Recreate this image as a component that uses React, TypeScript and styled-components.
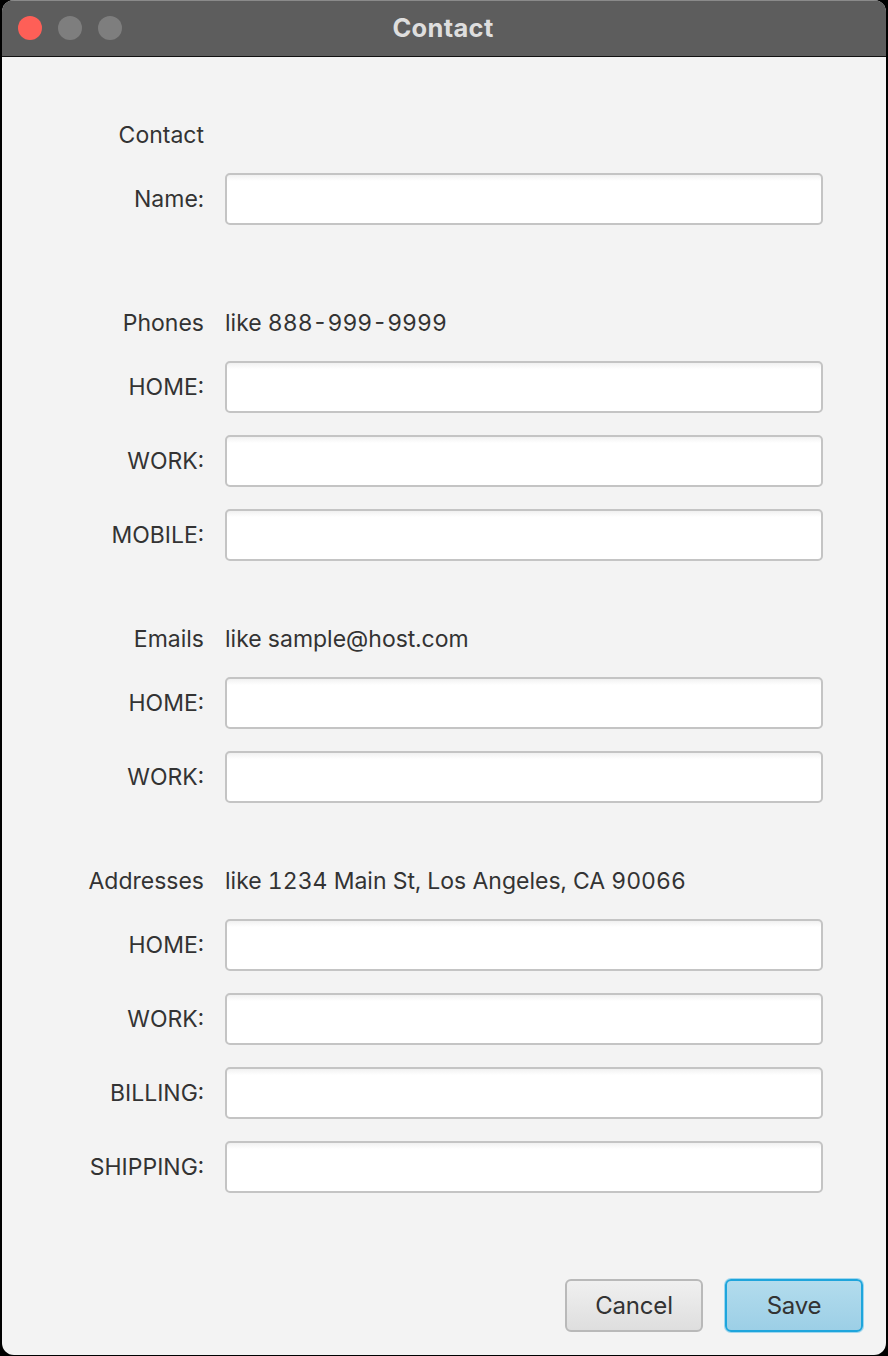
import React from "react";
import styled, { createGlobalStyle } from "styled-components";

const Global = createGlobalStyle`
  html, body { margin: 0; padding: 0; background: #000; }
  body { font-family: Inter, "Noto Sans", "Liberation Sans", sans-serif; }
  * { box-sizing: border-box; }
`;

const Window = styled.div`
  margin: 0 2px;
  width: 884px;
  height: 1355px;
  border-radius: 12px;
  overflow: hidden;
  background: #f3f3f3;
  display: flex;
  flex-direction: column;
`;

const TitleBar = styled.div`
  position: relative;
  height: 57px;
  flex: none;
  background: #5d5d5d;
  border-top: 1px solid #8a8a8a;
  border-bottom: 1px solid #111;
  display: flex;
  align-items: center;
  justify-content: center;
`;

const Lights = styled.div`
  position: absolute;
  left: 16px;
  top: 15px;
  display: flex;
  gap: 16px;
`;

const Light = styled.span<{ $color: string }>`
  width: 24px;
  height: 24px;
  border-radius: 50%;
  background: ${(p) => p.$color};
`;

const Title = styled.div`
  font-weight: 700;
  font-size: 25.5px;
  letter-spacing: 0.3px;
  color: #dedede;
  margin-left: -2px;
  margin-top: -2px;
`;

const Body = styled.div`
  flex: 1;
  display: flex;
  flex-direction: column;
  padding: 62px 23px 23px 58px;
`;

const Section = styled.div<{ $after: number }>`
  display: grid;
  grid-template-columns: 144px 598px;
  column-gap: 21px;
  row-gap: 22px;
  margin-bottom: ${(p) => p.$after}px;
`;

const Label = styled.div`
  font-size: 23px;
  color: #333;
  text-align: right;
  align-self: center;
  white-space: nowrap;
  font-feature-settings: "tnum";
`;

const Hint = styled.div`
  font-size: 23px;
  color: #333;
  height: 32px;
  display: flex;
  align-items: center;
  white-space: nowrap;
  font-feature-settings: "tnum";
`;

const Input = styled.input`
  height: 52px;
  width: 598px;
  border: 2px solid #c4c4c4;
  border-radius: 5px;
  background: linear-gradient(#f1f1f1 0px, #ffffff 6px, #ffffff 100%);
  font-size: 22px;
  font-family: inherit;
  padding: 0 10px;
  outline: none;
`;

const Spacer = styled.div`
  flex: 1;
`;

const Buttons = styled.div`
  display: flex;
  justify-content: flex-end;
  gap: 22px;
`;

const Button = styled.button<{ $primary?: boolean }>`
  width: 138px;
  height: 53px;
  border-radius: 6px;
  font-family: inherit;
  font-size: 24px;
  color: #333;
  border: 2px solid ${(p) => (p.$primary ? "#1ea5dc" : "#b9b9b9")};
  background: ${(p) =>
    p.$primary
      ? "linear-gradient(#b3dced, #9ccfe6)"
      : "linear-gradient(#f0f0f0, #dedede)"};
  box-shadow: ${(p) => (p.$primary ? "0 0 0 1px #9fd6ee" : "none")};
  letter-spacing: -0.2px;
`;

type Group = { title: string; hint?: string; fields: string[]; after: number };

const groups: Group[] = [
  { title: "Contact", fields: ["Name:"], after: 82 },
  { title: "Phones", hint: "like 888-999-9999", fields: ["HOME:", "WORK:", "MOBILE:"], after: 62 },
  { title: "Emails", hint: "like sample@host.com", fields: ["HOME:", "WORK:"], after: 62 },
  {
    title: "Addresses",
    hint: "like 1234 Main St, Los Angeles, CA 90066",
    fields: ["HOME:", "WORK:", "BILLING:", "SHIPPING:"],
    after: 0,
  },
];

export default function App() {
  return (
    <>
      <Global />
      <Window>
        <TitleBar>
          <Lights>
            <Light $color="#fe5f57" />
            <Light $color="#7e7e7e" />
            <Light $color="#7e7e7e" />
          </Lights>
          <Title>Contact</Title>
        </TitleBar>
        <Body>
          {groups.map((g) => (
            <Section key={g.title} $after={g.after}>
              <Label>{g.title}</Label>
              <Hint>{g.hint ?? ""}</Hint>
              {g.fields.map((f) => (
                <React.Fragment key={f}>
                  <Label>{f}</Label>
                  <Input type="text" />
                </React.Fragment>
              ))}
            </Section>
          ))}
          <Spacer />
          <Buttons>
            <Button>Cancel</Button>
            <Button $primary>Save</Button>
          </Buttons>
        </Body>
      </Window>
    </>
  );
}
